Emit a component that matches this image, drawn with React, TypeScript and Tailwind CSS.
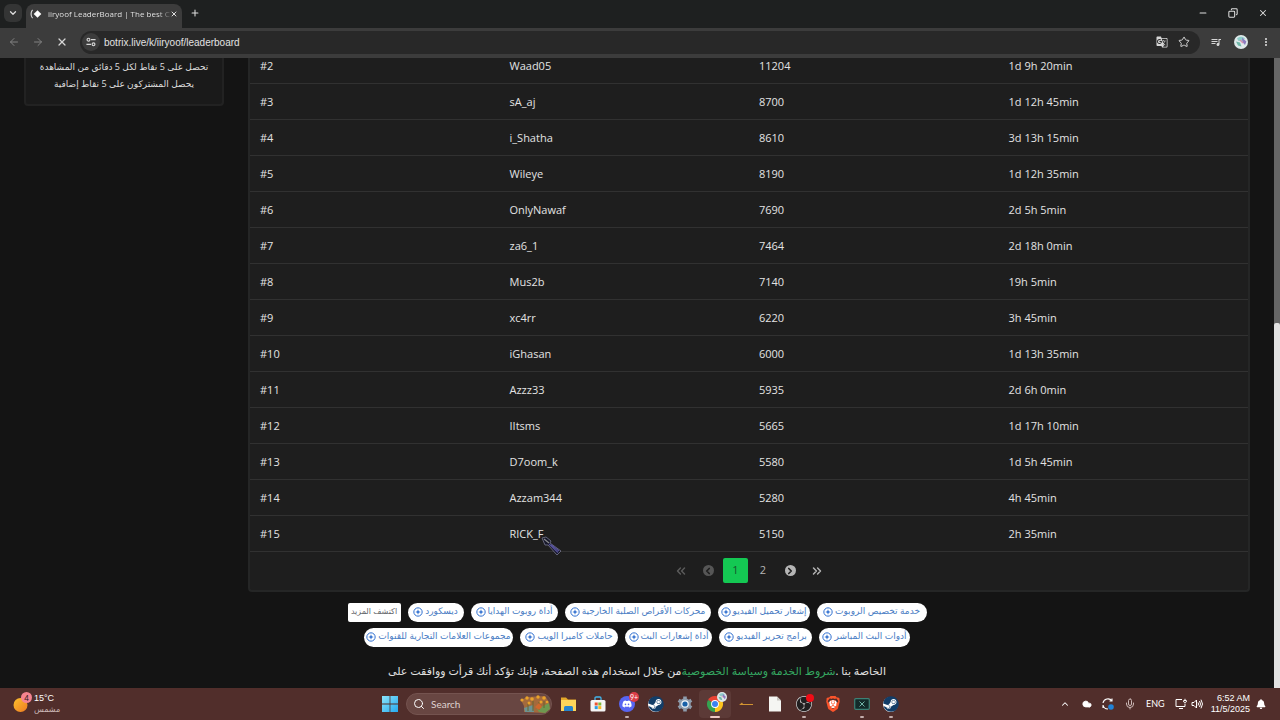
import React from 'react';
import {
  ArrowLeft, ArrowRight, ChevronDown, ChevronLeft, ChevronRight, ChevronsLeft, ChevronsRight, ChevronUp,
  Cloud, Copy, Mic, Minus, Plus, Search, Star, X,
} from 'lucide-react';
import { FaBell, FaDiscord, FaSteam } from 'react-icons/fa';
import { MdGTranslate, MdMoreVert, MdOutlineQueueMusic } from 'react-icons/md';
import { SiBrave, SiObsstudio } from 'react-icons/si';

interface Viewer {
  rank: number;
  name: string;
  points: number;
  watchTime: string;
}

const VIEWERS: Viewer[] = [
  { rank: 2, name: 'Waad05', points: 11204, watchTime: '1d 9h 20min' },
  { rank: 3, name: 'sA_aj', points: 8700, watchTime: '1d 12h 45min' },
  { rank: 4, name: 'i_Shatha', points: 8610, watchTime: '3d 13h 15min' },
  { rank: 5, name: 'Wileye', points: 8190, watchTime: '1d 12h 35min' },
  { rank: 6, name: 'OnlyNawaf', points: 7690, watchTime: '2d 5h 5min' },
  { rank: 7, name: 'za6_1', points: 7464, watchTime: '2d 18h 0min' },
  { rank: 8, name: 'Mus2b', points: 7140, watchTime: '19h 5min' },
  { rank: 9, name: 'xc4rr', points: 6220, watchTime: '3h 45min' },
  { rank: 10, name: 'iGhasan', points: 6000, watchTime: '1d 13h 35min' },
  { rank: 11, name: 'Azzz33', points: 5935, watchTime: '2d 6h 0min' },
  { rank: 12, name: 'IItsms', points: 5665, watchTime: '1d 17h 10min' },
  { rank: 13, name: 'D7oom_k', points: 5580, watchTime: '1d 5h 45min' },
  { rank: 14, name: 'Azzam344', points: 5280, watchTime: '4h 45min' },
  { rank: 15, name: 'RICK_F', points: 5150, watchTime: '2h 35min' },
];

const TOPICS = [
  [
    { label: 'ديسكورد', width: 'w-14' },
    { label: 'أداة روبوت الهدايا', width: 'w-[87px]' },
    { label: 'محركات الأقراص الصلبة الخارجية', width: 'w-[146px]' },
    { label: 'إشعار تحميل الفيديو', width: 'w-[92px]' },
    { label: 'خدمة تخصيص الروبوت', width: 'w-[110px]' },
  ],
  [
    { label: 'مجموعات العلامات التجارية للقنوات', width: 'w-[149px]' },
    { label: 'حاملات كاميرا الويب', width: 'w-[98px]' },
    { label: 'أداة إشعارات البث', width: 'w-[87px]' },
    { label: 'برامج تحرير الفيديو', width: 'w-[93px]' },
    { label: 'أدوات البث المباشر', width: 'w-[91px]' },
  ],
];

function SpinnerTabIcon() {
  return (
    <svg viewBox="0 0 12 12" className="size-3 shrink-0 text-white" fill="currentColor">
      <path d="M3 2.2C1.2 4 1.2 8 3 9.8L2.2 10.4C0 8 0 4 2.2 1.6Z" opacity=".8" />
      <path d="M7.5 2.2L11.3 6L7.5 9.8L3.7 6Z" />
    </svg>
  );
}

function SiteSettingsIcon() {
  return (
    <svg viewBox="0 0 12 12" className="size-2.5" fill="none" stroke="currentColor" strokeWidth="1.4">
      <circle cx="3" cy="3.2" r="1.7" />
      <path d="M6 3.2h5.5M.5 8.8h5.5" />
      <circle cx="9" cy="8.8" r="1.7" />
    </svg>
  );
}

function TopicIcon() {
  return (
    <svg viewBox="0 0 12 12" className="size-2.5 shrink-0" fill="none" stroke="#2f6fd0" strokeWidth="1.2">
      <circle cx="6" cy="6" r="5" />
      <path d="M6 2.8L6.9 5.1L9.2 6L6.9 6.9L6 9.2L5.1 6.9L2.8 6L5.1 5.1Z" fill="#2f6fd0" stroke="none" />
    </svg>
  );
}

function AvatarIcon({ className }: { className: string }) {
  return (
    <svg viewBox="0 0 14 14" className={className}>
      <circle cx="7" cy="7" r="7" fill="#dfe9ea" />
      <path d="M3 3.5C5 1 9 1 11 3.5L8 6L4.5 6Z" fill="#8ecfcb" />
      <path d="M8 2.5L12.4 6.5L11 10L8.4 7Z" fill="#8d7cc0" />
      <path d="M2 6.5L6 7.5L7.5 11.5L4 10.5Z" fill="#6fb8a9" />
      <path d="M6 5L9 8" stroke="#d68fae" strokeWidth="1.2" />
    </svg>
  );
}

function TitleBar() {
  return (
    <header className="flex h-7 shrink-0 items-end bg-[#1e2020] font-['Open_Sans',sans-serif] text-[#dedede]">
      <div className="flex w-full items-end justify-between">
        <div className="flex items-end">
          <button aria-label="Search tabs" className="mb-1.5 ml-1 flex size-[18px] items-center justify-center rounded-md bg-[#343535]">
            <ChevronDown className="size-2.5" strokeWidth={3} />
          </button>
          <div className="ml-1 flex h-6 w-[156px] items-center rounded-t-lg bg-[#3c3c3c] px-1 pb-1">
            <SpinnerTabIcon />
            <span className="ml-1.5 bg-linear-to-r from-[#f0f0f0] from-90% to-[#666666] bg-clip-text text-[8px] whitespace-nowrap text-transparent">
              iiryoof LeaderBoard | The best C
            </span>
            <button aria-label="Close tab" className="mr-1 ml-auto">
              <X className="size-2" strokeWidth={3} />
            </button>
          </div>
          <button aria-label="New tab" className="mb-2.5 ml-2">
            <Plus className="size-2.5" strokeWidth={2.5} />
          </button>
        </div>
        <div className="mr-3 mb-2.5 flex items-center gap-5">
          <button aria-label="Minimize" className="w-2.5"><Minus className="size-2.5" strokeWidth={2.5} /></button>
          <button aria-label="Restore" className="w-2.5"><Copy className="size-2.5 -scale-x-100" strokeWidth={2.5} /></button>
          <button aria-label="Close" className="w-2.5"><X className="size-2.5" strokeWidth={2.5} /></button>
        </div>
      </div>
    </header>
  );
}

function Toolbar() {
  return (
    <nav className="flex h-[30px] shrink-0 items-center bg-[#3c3c3c] pr-2 pb-0.5 font-['Liberation_Sans',sans-serif] text-[#d6d6d6]">
      <div className="flex w-20 items-center gap-3 pl-2">
        <button aria-label="Back" className="text-[#818181]"><ArrowLeft className="size-3" /></button>
        <button aria-label="Forward" className="text-[#818181]"><ArrowRight className="size-3" /></button>
        <button aria-label="Stop loading"><X className="size-3" strokeWidth={2.5} /></button>
      </div>
      <div className="flex h-[23px] flex-1 items-center rounded-full bg-[#282828] pr-2.5 pl-0.5">
        <button aria-label="Site information" className="flex size-[18px] items-center justify-center rounded-full bg-[#3c3c3c]">
          <SiteSettingsIcon />
        </button>
        <input
          aria-label="Address"
          defaultValue="botrix.live/k/iiryoof/leaderboard"
          className="ml-1 flex-1 bg-transparent text-[10px] text-[#e2e2e2] outline-none"
        />
        <button aria-label="Translate this page"><MdGTranslate className="size-3" /></button>
        <button aria-label="Bookmark" className="ml-2.5"><Star className="size-3" /></button>
      </div>
      <div className="ml-2.5 flex items-center gap-3">
        <button aria-label="Media controls"><MdOutlineQueueMusic className="size-3" /></button>
        <button aria-label="Profile"><AvatarIcon className="size-3.5" /></button>
        <button aria-label="Menu"><MdMoreVert className="size-3" /></button>
      </div>
    </nav>
  );
}

function Leaderboard() {
  return (
    <section className="-mt-[11px] flex-1 rounded border-2 border-t-0 border-[#252626] bg-[#1e1e1e]">
      <table className="w-full table-fixed text-left text-[11px] text-[#e3e3e3]">
        <tbody>
          {VIEWERS.map((v) => (
            <tr key={v.rank} className="h-9 border-b border-[#313131]">
              <td className="px-2.5 pt-0.5">#{v.rank}</td>
              <td className="px-2.5 pt-0.5">{v.name}</td>
              <td className="px-2.5 pt-0.5">{v.points}</td>
              <td className="px-2.5 pt-0.5">{v.watchTime}</td>
            </tr>
          ))}
        </tbody>
      </table>
      <div className="flex h-[38px] items-center justify-center gap-[3px] text-[11px] text-[#b5b5b5]">
        <button aria-label="First page" className="flex size-6 items-center justify-center text-[#5b5b5b]">
          <ChevronsLeft className="size-3.5" strokeWidth={2.5} />
        </button>
        <button aria-label="Previous page" className="flex size-6 items-center justify-center">
          <span className="flex size-[11px] items-center justify-center rounded-full bg-[#565656] text-[#1e1e1e]">
            <ChevronLeft className="size-2.5" strokeWidth={4} />
          </span>
        </button>
        <button className="size-[25px] rounded-xs bg-[#14c853] text-[#14542b]">1</button>
        <button className="size-6">2</button>
        <button aria-label="Next page" className="flex size-6 items-center justify-center">
          <span className="flex size-[11px] items-center justify-center rounded-full bg-[#b5b5b5] text-[#1e1e1e]">
            <ChevronRight className="size-2.5" strokeWidth={4} />
          </span>
        </button>
        <button aria-label="Last page" className="flex size-6 items-center justify-center">
          <ChevronsRight className="size-3.5" strokeWidth={2.5} />
        </button>
      </div>
    </section>
  );
}

function RelatedTopics() {
  return (
    <div className="mt-[11px] flex flex-col gap-1.5 font-['Liberation_Sans','DejaVu_Sans',sans-serif] text-[9px]">
      {TOPICS.map((row, i) => (
        <div key={i} className="flex h-[19px] items-center justify-center gap-[7px]">
          {i === 0 && (
            <span dir="rtl" className="flex h-[19px] w-[53px] items-center justify-center rounded-xs bg-white text-[8px] whitespace-nowrap text-[#5f6368]">
              اكتشف المزيد
            </span>
          )}
          {row.map((topic) => (
            <a
              key={topic.label}
              href="#"
              className={`${topic.width} flex h-[19px] items-center justify-center gap-0.5 rounded-full bg-white text-[#4a7dc4]`}
            >
              <TopicIcon />
              <span dir="rtl" className="whitespace-nowrap">{topic.label}</span>
            </a>
          ))}
        </div>
      ))}
    </div>
  );
}

function MouseCursor() {
  return (
    <svg viewBox="0 0 22 22" className="absolute top-[478px] left-[541px] size-[22px]">
      <path d="M1 2L5 1L10 5L9 7L20 15L16 19L7 9L4 9Z" fill="#17182a" stroke="#77778f" strokeWidth="0.8" />
      <path d="M3 3L8 7" stroke="#8b8c8e" strokeWidth="1.2" />
      <path d="M8 8L17 16.5M10 8.5L18 15" stroke="#57529a" strokeWidth="1.2" />
    </svg>
  );
}

function WindowsIcon() {
  return (
    <svg viewBox="0 0 16 16" className="size-4">
      <defs>
        <linearGradient id="win" x1="0" y1="0" x2="1" y2="1">
          <stop offset="0" stopColor="#8be4fc" />
          <stop offset="1" stopColor="#25a9ee" />
        </linearGradient>
      </defs>
      <path d="M0 0h7.6v7.6H0zM8.4 0H16v7.6H8.4zM0 8.4h7.6V16H0zM8.4 8.4H16V16H8.4z" fill="url(#win)" />
    </svg>
  );
}

function FlowersIcon() {
  return (
    <svg viewBox="0 0 32 20" className="h-5 w-8">
      <path d="M2 6L8 3L26 2L30 8L31 15L26 19L5 18L5 12Z" fill="#a36a3d" />
      <path d="M5 14L14 11L15 18L6 18Z" fill="#6d9291" />
      <path d="M18 15L30 9L31 15L26 19L20 18Z" fill="#6e9850" />
      <path d="M9 9v8M14 7v10M20 8v8M25 7v7" stroke="#68652e" />
      <g fill="#e9a22a">
        <circle cx="3" cy="6" r="1.6" /><circle cx="8" cy="4" r="1.7" /><circle cx="13" cy="5" r="1.8" />
        <circle cx="19" cy="3" r="1.7" /><circle cx="25" cy="4" r="1.8" /><circle cx="22" cy="8" r="1.5" />
        <circle cx="10" cy="9" r="1.5" /><circle cx="28" cy="8" r="1.3" />
      </g>
      <path d="M16 13l4-4 3 4-3 3z" fill="#cf672c" />
    </svg>
  );
}

function FolderIcon() {
  return (
    <svg viewBox="0 0 17 16" className="h-4 w-[17px]">
      <path d="M1 1.5h5l2 2h8v4H1z" fill="#e3a82b" />
      <path d="M1 4h15v11H1z" fill="#fcd55a" />
      <path d="M4 15v-3.5q0-1.5 1.5-1.5h6q1.5 0 1.5 1.5V15z" fill="#2484ce" />
    </svg>
  );
}

function StoreIcon() {
  return (
    <svg viewBox="0 0 16 16" className="size-4">
      <path d="M5 5V2.2q0-1.2 1.2-1.2h3.6Q11 1 11 2.2V5" fill="none" stroke="#42b5eb" strokeWidth="1.3" />
      <rect x="0.5" y="4" width="15" height="11.5" rx="1.5" fill="#f5f5f5" />
      <path d="M4.7 6.5h3v3h-3z" fill="#ee5430" /><path d="M8.3 6.5h3v3h-3z" fill="#7fb83a" />
      <path d="M4.7 10.1h3v3h-3z" fill="#2c9ee4" /><path d="M8.3 10.1h3v3h-3z" fill="#f6b928" />
    </svg>
  );
}

function SteamIcon() {
  return (
    <span className="flex size-[15px] items-center justify-center rounded-full bg-white">
      <FaSteam className="size-4 shrink-0 text-[#123d68]" />
    </span>
  );
}

function GearIcon() {
  return (
    <svg viewBox="0 0 16 16" className="size-4">
      <g stroke="#8e9cac" strokeWidth="3.6" strokeLinejoin="round">
        <path d="M8 .6v14.8M1.6 4.3l12.8 7.4M1.6 11.7l12.8-7.4" />
      </g>
      <circle cx="8" cy="8" r="5.8" fill="#8e9cac" />
      <circle cx="8" cy="8" r="3.8" fill="#f0f5fa" />
      <circle cx="8" cy="8" r="2.6" fill="#1760a8" />
    </svg>
  );
}

function ChromeIcon() {
  return (
    <svg viewBox="0 0 16 16" className="size-4">
      <path d="M8 8L1.07 4A8 8 0 0 1 14.93 4z" fill="#e94335" />
      <path d="M8 8L14.93 4A8 8 0 0 1 8 16z" fill="#fcc31e" />
      <path d="M8 8V16A8 8 0 0 1 1.07 4z" fill="#34a350" />
      <circle cx="8" cy="8" r="3.9" fill="#fff" />
      <circle cx="8" cy="8" r="3" fill="#3c82f0" />
    </svg>
  );
}

function TaskbarApp({ label, running, children }: { label: string; running?: boolean; children: React.ReactNode }) {
  return (
    <button aria-label={label} className="relative flex h-8 w-[29px] items-center justify-center">
      {children}
      {running && <span className="absolute bottom-0.5 h-0.5 w-1 rounded-full bg-[#c3aeac]" />}
    </button>
  );
}

function Taskbar() {
  return (
    <footer className="grid h-8 shrink-0 grid-cols-[1fr_auto_1fr] items-center bg-[#512e2b] font-['Lato','DejaVu_Sans',sans-serif] text-[9px] text-white">
      <div className="flex items-center pl-3">
        <span className="relative mr-1">
          <svg viewBox="0 0 18 20" className="h-5 w-[18px]">
            <defs>
              <linearGradient id="sun" x1="0" y1="0" x2="1" y2="1">
                <stop offset="0" stopColor="#fdc22e" />
                <stop offset="1" stopColor="#ee7a21" />
              </linearGradient>
            </defs>
            <circle cx="8.5" cy="11" r="7" fill="url(#sun)" />
          </svg>
          <span className="absolute -top-0.5 -right-0.5 flex size-[11px] items-center justify-center rounded-full bg-[#f5838f] text-[8px] text-[#2c1718]">4</span>
        </span>
        <div className="font-['Liberation_Sans','DejaVu_Sans',sans-serif] leading-[11px]">
          <div>15°C</div>
          <div dir="rtl" className="text-[8px] text-[#cdbab8]">مشمس</div>
        </div>
      </div>
      <div className="flex items-center">
        <TaskbarApp label="Start"><WindowsIcon /></TaskbarApp>
        <label className="mr-0.5 ml-0.5 flex h-[22px] w-[146px] items-center rounded-full border border-[#74534f] bg-[#684642] pl-1.5">
          <Search className="size-3 shrink-0" />
          <input aria-label="Search" placeholder="Search" className="ml-1.5 w-0 flex-1 bg-transparent text-[10px] outline-none placeholder:text-[#dfd2d0]" />
          <FlowersIcon />
        </label>
        <TaskbarApp label="File Explorer"><FolderIcon /></TaskbarApp>
        <TaskbarApp label="Microsoft Store"><StoreIcon /></TaskbarApp>
        <TaskbarApp label="Discord" running>
          <span className="flex size-4 items-center justify-center rounded-full bg-[#5865f2]"><FaDiscord className="size-2.5" /></span>
          <span className="absolute top-1 right-0.5 flex h-2.5 w-2.5 items-center justify-center rounded-full bg-[#da3d48] text-[7px]">9+</span>
        </TaskbarApp>
        <TaskbarApp label="Steam"><SteamIcon /></TaskbarApp>
        <TaskbarApp label="Settings"><GearIcon /></TaskbarApp>
        <button aria-label="Google Chrome" className="relative flex h-7 w-8 items-center justify-center rounded bg-[#5c3a37]">
          <ChromeIcon />
          <AvatarIcon className="absolute top-0.5 right-1 size-2.5" />
          <span className="absolute bottom-0 h-0.5 w-2.5 rounded-full bg-[#edc8c4]" />
        </button>
        <TaskbarApp label="Launcher">
          <svg viewBox="0 0 14 4" className="h-1 w-3.5"><path d="M0 3L3 .5L4 2H14V3z" fill="#d39431" /></svg>
        </TaskbarApp>
        <TaskbarApp label="Document">
          <svg viewBox="0 0 12 16" className="h-4 w-3"><path d="M0 .5h8l4 4v11H0z" fill="#f5f5f2" /><path d="M8 .5v4h4z" fill="#c8c5c0" /></svg>
        </TaskbarApp>
        <TaskbarApp label="OBS Studio" running>
          <span className="flex size-4 items-center justify-center rounded-full bg-[#211f20]"><SiObsstudio className="size-4 text-[#d4d0d0]" /></span>
          <span className="absolute top-1.5 right-1 size-2 rounded-full bg-[#f20c16]" />
        </TaskbarApp>
        <TaskbarApp label="Brave">
          <span className="absolute size-2 rounded-full bg-white" />
          <SiBrave className="relative size-4 text-[#fb542b]" />
        </TaskbarApp>
        <TaskbarApp label="Capture" running>
          <svg viewBox="0 0 16 12" className="h-3 w-4"><rect x=".7" y=".7" width="14.6" height="10.6" rx="1" fill="#132b2a" stroke="#3d8175" strokeWidth="1.2" /><path d="M5.5 3.5l5 5m0-5l-5 5" stroke="#72b3a6" /></svg>
        </TaskbarApp>
        <TaskbarApp label="Steam game" running><SteamIcon /></TaskbarApp>
      </div>
      <div className="flex items-center justify-end pr-3.5">
        <button aria-label="Show hidden icons"><ChevronUp className="size-2.5" strokeWidth={2.5} /></button>
        <Cloud className="ml-3 size-2.5" fill="currentColor" />
        <svg viewBox="0 0 12 12" className="ml-2.5 size-3" fill="none" stroke="currentColor" strokeWidth="1.1">
          <path d="M1 5A5 5 0 0 1 10 3M10 .5V3H7.5M1 7a5 5 0 0 0 5 4M1 10V7.5" />
          <circle cx="9" cy="9" r="2.8" fill="#2083d8" stroke="none" />
        </svg>
        <Mic className="ml-2.5 size-3 text-[#cdb9b7]" />
        <span className="ml-2.5">ENG</span>
        <svg viewBox="0 0 12 12" className="ml-2.5 size-3" fill="none" stroke="currentColor">
          <path d="M7 1.5H1v7h9V6M4 10.5h4M10 .8v1.7M8.7 2.5h2.6v1.5L10 5.2L8.7 4z" />
        </svg>
        <svg viewBox="0 0 12 12" className="ml-1 size-3" fill="none" stroke="currentColor">
          <path d="M1 4.5h2L5.5 2v8L3 7.5H1zM7 4.5q1 1.5 0 3M8.5 3q2 3 0 6M10 1.7q3 4.3 0 8.6" />
        </svg>
        <div className="ml-2 text-right font-['Liberation_Sans',sans-serif] leading-[11px]">
          <div>6:52 AM</div>
          <div>11/5/2025</div>
        </div>
        <FaBell className="ml-1.5 size-2.5" />
      </div>
    </footer>
  );
}

export default function App() {
  return (
    <div className="flex h-screen flex-col overflow-hidden bg-[#141414] font-['Open_Sans','DejaVu_Sans',sans-serif]">
      <TitleBar />
      <Toolbar />
      <div className="relative flex min-h-0 flex-1 overflow-hidden">
        <main className="min-w-0 flex-1 px-6">
          <div className="flex items-start gap-6">
            <aside dir="rtl" className="h-12 w-50 rounded-b border-2 border-t-0 border-[#222222] bg-[#1a1a1a] text-center text-[9px] leading-[17px] text-[#dedede]">
              <p>تحصل على 5 نقاط لكل 5 دقائق من المشاهدة</p>
              <p>يحصل المشتركون على 5 نقاط إضافية</p>
            </aside>
            <Leaderboard />
          </div>
          <RelatedTopics />
          <p className="mt-4 flex justify-center text-[11px] whitespace-nowrap text-[#e0e0e0]">
            <span dir="rtl">من خلال استخدام هذه الصفحة، فإنك تؤكد أنك قرأت ووافقت على</span>
            <a href="#" dir="rtl" className="text-[#35a761]">شروط الخدمة وسياسة الخصوصية</a>
            <span>. الخاصة بنا</span>
          </p>
        </main>
        <div className="flex w-1.5 flex-col bg-[#666666]">
          <div className="mt-auto h-[58%] rounded-t-xs bg-[#e2e2e2]" />
        </div>
        <MouseCursor />
      </div>
      <Taskbar />
    </div>
  );
}
